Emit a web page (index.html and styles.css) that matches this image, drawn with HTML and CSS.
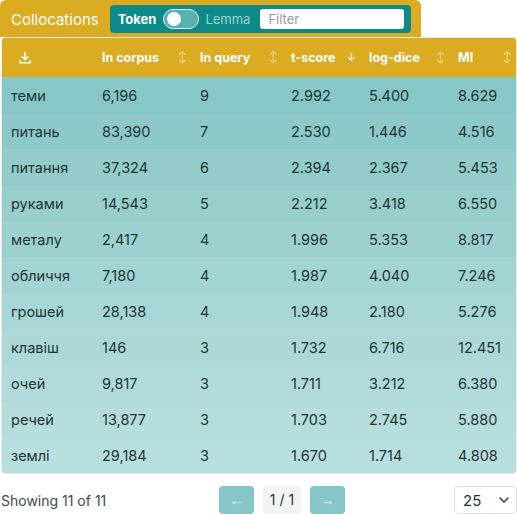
FILE: index.html
```html
<!DOCTYPE html>
<html lang="uk">
<head>
  <meta charset="UTF-8" />
  <meta name="viewport" content="width=device-width, initial-scale=1.0" />
  <title>Collocations</title>
  <link rel="stylesheet" href="styles.css">
</head>
<body>
  <div class="tab">
    <span class="tab-title">Collocations</span>
    <div class="controls">
      <span class="opt opt-on">Token</span>
      <span class="switch"><span class="knob"></span></span>
      <span class="opt">Lemma</span>
      <input class="filter" type="text" placeholder="Filter">
    </div>
  </div>

  <table class="grid">
    <colgroup>
      <col class="c1"><col class="c2"><col class="c3"><col class="c4"><col class="c5"><col class="c6">
    </colgroup>
    <thead>
      <tr>
        <th class="dl">
          <svg width="14" height="14" viewBox="0 0 14 14"><path d="M7 1.5v7M4.2 5.8L7 8.6l2.8-2.8M1.8 9.5v2.3h10.4V9.5" fill="none" stroke="#fff" stroke-width="1.6" stroke-linecap="round" stroke-linejoin="round"/></svg>
        </th>
        <th><span>In corpus</span><i class="sort">&#8597;</i></th>
        <th><span>In query</span><i class="sort">&#8597;</i></th>
        <th><span>t-score</span><i class="sort active">&#8595;</i></th>
        <th><span>log-dice</span><i class="sort">&#8597;</i></th>
        <th><span>MI</span><i class="sort">&#8597;</i></th>
      </tr>
    </thead>
    <tbody>
      <tr><td>теми</td><td>6,196</td><td>9</td><td>2.992</td><td>5.400</td><td>8.629</td></tr>
      <tr><td>питань</td><td>83,390</td><td>7</td><td>2.530</td><td>1.446</td><td>4.516</td></tr>
      <tr><td>питання</td><td>37,324</td><td>6</td><td>2.394</td><td>2.367</td><td>5.453</td></tr>
      <tr><td>руками</td><td>14,543</td><td>5</td><td>2.212</td><td>3.418</td><td>6.550</td></tr>
      <tr><td>металу</td><td>2,417</td><td>4</td><td>1.996</td><td>5.353</td><td>8.817</td></tr>
      <tr><td>обличчя</td><td>7,180</td><td>4</td><td>1.987</td><td>4.040</td><td>7.246</td></tr>
      <tr><td>грошей</td><td>28,138</td><td>4</td><td>1.948</td><td>2.180</td><td>5.276</td></tr>
      <tr><td>клавіш</td><td>146</td><td>3</td><td>1.732</td><td>6.716</td><td>12.451</td></tr>
      <tr><td>очей</td><td>9,817</td><td>3</td><td>1.711</td><td>3.212</td><td>6.380</td></tr>
      <tr><td>речей</td><td>13,877</td><td>3</td><td>1.703</td><td>2.745</td><td>5.880</td></tr>
      <tr><td>землі</td><td>29,184</td><td>3</td><td>1.670</td><td>1.714</td><td>4.808</td></tr>
    </tbody>
  </table>

  <div class="pager">
    <span class="count">Showing 11 of 11</span>
    <div class="pages">
      <button class="page-btn">&larr;</button>
      <span class="page-num">1 / 1</span>
      <button class="page-btn">&rarr;</button>
    </div>
    <div class="size">
      <span>25</span>
      <svg width="10" height="6" viewBox="0 0 10 6"><path d="M1 1l4 4 4-4" fill="none" stroke="#333" stroke-width="1.4" stroke-linecap="round" stroke-linejoin="round"/></svg>
    </div>
  </div>
</body>
</html>
```

FILE: styles.css
```css
body {
  margin: 0;
  font-family: Inter, "DejaVu Sans", sans-serif;
  color: #1f3535;
  background: #fff;
  width: 517px;
}
.tab {
  display: inline-flex;
  align-items: center;
  background-color: #dbab21;
  border-radius: 6px 6px 0 0;
  padding: 5px 10px 4px 11px;
  height: 28px;
}
.tab-title {
  color: #fff;
  font-size: 15px;
  margin-right: 11px;
}
.controls {
  display: flex;
  align-items: center;
  background-color: #0c8a8a;
  border-radius: 4px;
  height: 28px;
  padding: 0 7px 0 8px;
}
.opt {
  font-size: 13px;
  color: #9fd3cf;
}
.opt-on {
  color: #fff;
  font-weight: bold;
}
.switch {
  position: relative;
  width: 34px;
  height: 18px;
  border: 1px solid #e6f3f3;
  border-radius: 10px;
  background-color: #5ab0ad;
  margin: 0 6px 0 7px;
}
.knob {
  position: absolute;
  left: 3px;
  top: 2px;
  width: 14px;
  height: 14px;
  border-radius: 50%;
  background: #fff;
}
.filter {
  margin-left: 10px;
  width: 144px;
  height: 20px;
  box-sizing: border-box;
  border: none;
  border-radius: 3px;
  padding: 0 8px;
  font-family: inherit;
  font-size: 13px;
  outline: none;
}
.filter::placeholder {
  color: #9a9a9a;
}
.grid {
  width: 516px;
  margin-left: 1px;
  border-collapse: separate;
  border-spacing: 0;
  table-layout: fixed;
  border: 1px solid #e4e8e8;
  border-radius: 4px;
  overflow: hidden;
}
.c1 { width: 91px; }
.c2 { width: 98px; }
.c3 { width: 91px; }
.c4 { width: 78px; }
.c5 { width: 89px; }
.c6 { width: 67px; }
th {
  background-color: #dbab21;
  color: #fff;
  font-size: 12.5px;
  font-weight: bold;
  text-align: left;
  height: 39px;
  padding: 0 0 0 9px;
}
th span {
  display: inline-block;
}
th.dl {
  padding-left: 16px;
}
th.dl svg {
  display: block;
}
.sort {
  float: right;
  font-style: normal;
  font-weight: normal;
  font-size: 11px;
  color: #f1d98f;
  margin-right: 4px;
}
.sort.active {
  color: #fff;
}
td {
  height: 36px;
  padding: 0 0 0 9px;
  font-size: 14.5px;
  white-space: nowrap;
}
tbody tr:nth-child(1) { background-color: #88c7c7; }
tbody tr:nth-child(2) { background-color: #8ec9c9; }
tbody tr:nth-child(3) { background-color: #93ccca; }
tbody tr:nth-child(4) { background-color: #98cfcd; }
tbody tr:nth-child(5) { background-color: #9dd1d0; }
tbody tr:nth-child(6) { background-color: #a2d4d3; }
tbody tr:nth-child(7) { background-color: #a7d6d6; }
tbody tr:nth-child(8) { background-color: #acd9d8; }
tbody tr:nth-child(9) { background-color: #b0dbda; }
tbody tr:nth-child(10) { background-color: #b4dddc; }
tbody tr:nth-child(11) { background-color: #b8dfdf; }
.pager {
  display: flex;
  align-items: center;
  justify-content: space-between;
  margin-top: 12px;
  padding: 0 0 0 1px;
}
.count {
  font-size: 14px;
  color: #3d4a4a;
  width: 150px;
}
.pages {
  display: flex;
  align-items: center;
  gap: 9px;
  margin-left: 68px;
}
.page-btn {
  width: 35px;
  height: 28px;
  border: none;
  border-radius: 4px;
  background-color: #86c6c6;
  color: #fff;
  font-size: 14px;
  padding: 0;
}
.page-num {
  display: inline-block;
  width: 38px;
  height: 28px;
  line-height: 28px;
  text-align: center;
  background-color: #f2f3f3;
  border-radius: 4px;
  font-size: 14px;
}
.size {
  display: flex;
  align-items: center;
  justify-content: space-between;
  box-sizing: border-box;
  width: 63px;
  height: 28px;
  border: 1px solid #dde2e2;
  border-radius: 4px;
  padding: 0 7px 0 8px;
  font-size: 15px;
  margin-left: auto;
}
```
